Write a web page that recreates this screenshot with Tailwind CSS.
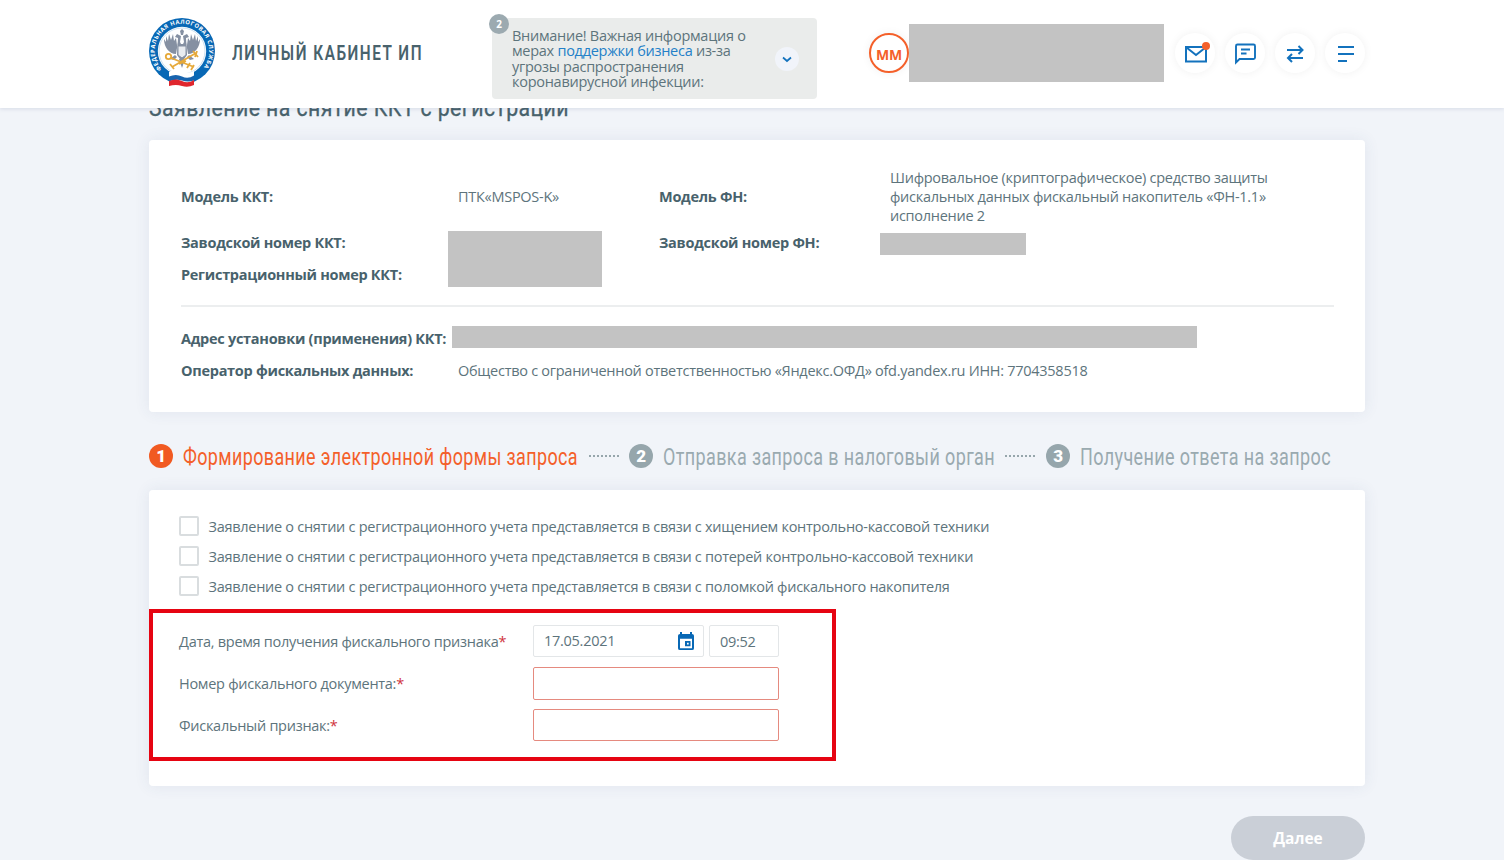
<!DOCTYPE html>
<html lang="ru">
<head>
  <meta charset="UTF-8" />
  <meta name="viewport" content="width=device-width, initial-scale=1.0"/>
  <title>Личный кабинет ИП</title>
  <script src="https://cdn.jsdelivr.net/npm/@tailwindcss/browser@4"></script>
</head>
<body class="h-[860px] overflow-hidden bg-[#f1f4f9] font-['Open_Sans',sans-serif] text-[14.5px] tracking-[-0.275px] text-[#5d747c]">

  <!-- Header -->
  <header class="relative z-10 h-[108px] bg-white shadow-[0_1px_4px_rgba(70,80,130,0.15)]">
    <div class="flex h-[106px] items-center pl-[149px]">

      <!-- Emblem -->
      <svg class="-mt-px h-[72px] w-[66px] shrink-0 tracking-normal" viewBox="0 0 66 72">
        <circle cx="33" cy="34" r="33" fill="#0868b5"/>
        <circle cx="33" cy="34" r="24.2" fill="#fff"/>
        <circle cx="33" cy="34" r="23" fill="none" stroke="#a9cbe5" stroke-width=".6"/>
        <path id="ring" d="M12.7 52.1A27.2 27.2 0 1 1 53.3 52.1" fill="none"/>
        <text class="font-['Open_Sans',sans-serif] text-[5.8px] font-bold" fill="#fff" textLength="122"><textPath href="#ring">ФЕДЕРАЛЬНАЯ НАЛОГОВАЯ СЛУЖБА</textPath></text>
        <!-- eagle -->
        <g fill="#8590a2">
          <path d="M27 37C20 37 15 30 15 22l2 3 0-6 2 5 1-7 2 6 2-6 1 7 2-3 1 7 1-3z"/>
          <path d="M39 37c7 0 12-7 12-15l-2 3 0-6-2 5-1-7-2 6-2-6-1 7-2-3-1 7-1-3z"/>
          <path d="M28 17l4 2-1 6 1 2h2l1-2-1-6 4-2 2 3-3 1 1 17-5 7-5-7 1-17-3-1zM31 14l2-2 2 2-1 4h-2z"/>
          <path d="M26 38l-5 4 4 1 3-3zM40 38l5 4-4 1-3-3zM30 42l3 9 3-9z"/>
        </g>
        <path d="M29 29h8v9l-4 3-4-3z" fill="#e9ecf0" stroke="#8590a2"/>
        <g fill="none" stroke="#e6a93a" stroke-width="1.8">
          <circle cx="19.5" cy="39.5" r="2.7"/>
          <path d="M22 41L45 50M38 51l3-5M42 53l3-5M23 50L47 36M44 34l5 6M48 34l-2 6M21 47l4 5M30 47l7-3"/>
        </g>
        <!-- flag -->
        <path d="M20 55q7-4 13-1t12 0v11q-6 2-12 0t-13 2z" fill="#fff"/>
        <path d="M20 59.500q7-3 13 0t12-1v5q-6 2-12 0t-13 1z" fill="#1764ae"/>
        <path d="M20 64q7-3 13 0t12-1v5q-6 3-12 1t-13 0z" fill="#e0262d"/>
      </svg>

      <svg class="ml-[17px] h-8 w-[192px] shrink-0" fill="#48626c">
        <text class="font-[Roboto,sans-serif] text-[20px] font-semibold tracking-[2px]" x="0" y="23" textLength="191" lengthAdjust="spacingAndGlyphs">ЛИЧНЫЙ КАБИНЕТ ИП</text>
      </svg>

      <!-- Notice -->
      <div class="relative mt-[11px] ml-[68px] flex h-[81px] w-[325px] shrink-0 items-center justify-between rounded bg-[#eaeceb] pr-[18px] pl-[20px]">
        <span class="absolute -top-[4px] -left-[3px] flex size-5 items-center justify-center rounded-full bg-[#9caab0] text-[10px] font-bold text-white">2</span>
        <p class="w-[240px] leading-[15.300px] whitespace-nowrap">Внимание! Важная информация о<br>мерах <a class="text-[#2380c8]">поддержки бизнеса</a> из-за<br>угрозы распространения<br>коронавирусной инфекции:</p>
        <span class="flex size-6 items-center justify-center rounded-full bg-[#f1f4fa]">
          <svg class="size-6" viewBox="0 0 24 24" fill="none" stroke="#1372bd" stroke-width="1.700"><path d="M8 10.500l4 3.500 4-3.500"/></svg>
        </span>
      </div>

      <!-- User -->
      <div class="ml-[52px] flex size-10 shrink-0 items-center justify-center rounded-full border-2 border-[#f4602a] pt-[2px] text-[14px] font-bold text-[#f4602a] shadow-[0_0_10px_rgba(0,0,0,0.06)]">ММ</div>
      <div class="h-[58px] w-[255px] shrink-0 bg-[#c3c3c3]"></div>

      <!-- Actions -->
      <div class="ml-[11px] flex shrink-0 gap-[10px]">
        <span class="size-10 rounded-full bg-white shadow-[0_0_10px_rgba(0,0,0,0.06)]">
          <svg class="size-10" viewBox="0 0 40 40" fill="none" stroke="#1372bd" stroke-width="2"><path d="M11 14h20v14.500H11zM11.500 14.500l9.500 7.500 9.500-7.500"/><circle cx="31" cy="13" r="4" fill="#f4602a" stroke="none"/></svg>
        </span>
        <span class="size-10 rounded-full bg-white shadow-[0_0_10px_rgba(0,0,0,0.06)]">
          <svg class="size-10" viewBox="0 0 40 40" fill="none" stroke="#1372bd" stroke-width="1.900"><path d="M11 29.500V13q0-1.500 1.500-1.500h16q1.500 0 1.500 1.500v11.500q0 1.500-1.500 1.500H14.500zM16 16.500h9M16 20.500h5.500"/></svg>
        </span>
        <span class="size-10 rounded-full bg-white shadow-[0_0_10px_rgba(0,0,0,0.06)]">
          <svg class="size-10" viewBox="0 0 40 40" fill="none" stroke="#1372bd" stroke-width="2"><path d="M12 17h15M23.500 13l4 4-4 4M28 25H13M17 21l-4 4 4 4"/></svg>
        </span>
        <span class="size-10 rounded-full bg-white shadow-[0_0_10px_rgba(0,0,0,0.06)]">
          <svg class="size-10" viewBox="0 0 40 40" fill="none" stroke="#1372bd" stroke-width="2"><path d="M13 14h16M13 21h16M13 28h9"/></svg>
        </span>
      </div>
    </div>
  </header>

  <!-- Main -->
  <main class="-mt-4 pl-[149px]">
    <svg class="block h-12 w-[430px]" fill="#48626c">
      <text class="font-[Roboto,sans-serif] text-[24px] tracking-[0.5px]" x="0" y="23.500" textLength="420" lengthAdjust="spacingAndGlyphs" stroke="#48626c" stroke-width=".3">Заявление на снятие ККТ с регистрации</text>
    </svg>

    <!-- Device details -->
    <section class="h-[272px] w-[1216px] rounded bg-white px-8 pt-[27px] shadow-[0_0_16px_rgba(60,75,120,0.09)]">
      <div class="grid grid-cols-[267px_211px_221px_1fr] grid-rows-[60px_32px_32px] items-center">
        <b class="text-[#48626c]">Модель ККТ:</b>
        <span class="pl-[10px]">ПТК«MSPOS-K»</span>
        <b class="text-[#48626c]">Модель ФН:</b>
        <span class="-mt-[2px] pl-[10px] leading-[19px] whitespace-nowrap">Шифровальное (криптографическое) средство защиты<br>фискальных данных фискальный накопитель «ФН-1.1»<br>исполнение 2</span>
        <b class="text-[#48626c]">Заводской номер ККТ:</b>
        <span class="row-span-2 h-14 w-[154px] bg-[#c3c3c3]"></span>
        <b class="text-[#48626c]">Заводской номер ФН:</b>
        <span class="mt-[2px] h-[22px] w-[146px] bg-[#c3c3c3]"></span>
        <b class="text-[#48626c]">Регистрационный номер ККТ:</b>
      </div>
      <hr class="mt-[14px] mr-[-1px] mb-4 border-t-2 border-[#eceeef]">
      <div class="flex h-8 items-center">
        <b class="w-[271px] whitespace-nowrap text-[#48626c]">Адрес установки (применения) ККТ:</b>
        <span class="mb-[4px] h-[22px] w-[745px] bg-[#c3c3c3]"></span>
      </div>
      <div class="flex h-8 items-center">
        <b class="w-[277px] text-[#48626c]">Оператор фискальных данных:</b>
        <span>Общество с ограниченной ответственностью «Яндекс.ОФД» ofd.yandex.ru ИНН: 7704358518</span>
      </div>
    </section>

    <!-- Steps -->
    <div class="flex h-[78px] items-center font-[Roboto,sans-serif]">
      <span class="mt-[9px] flex size-6 items-center justify-center rounded-full bg-[#f15a22] text-[17px] leading-6 font-black text-white">1</span>
      <svg class="mt-[12px] ml-[10px] h-9 w-[396px]" fill="#f4602a"><text class="text-[23px] tracking-[0.5px]" x="0" y="26" textLength="395" lengthAdjust="spacingAndGlyphs">Формирование электронной формы запроса</text></svg>
      <svg class="mt-[9px] ml-[10px] h-[2px] w-[30px]" stroke="#96a6ac"><path d="M0 1h30" stroke-width="2" stroke-dasharray="2 2"/></svg>
      <span class="mt-[9px] ml-[10px] flex size-6 items-center justify-center rounded-full bg-[#96a6ac] text-[17px] leading-6 font-black text-white">2</span>
      <svg class="mt-[12px] ml-[10px] h-9 w-[332px]" fill="#9aaab0"><text class="text-[23px] tracking-[0.5px]" x="0" y="26" textLength="332" lengthAdjust="spacingAndGlyphs">Отправка запроса в налоговый орган</text></svg>
      <svg class="mt-[9px] ml-[10px] h-[2px] w-[31px]" stroke="#96a6ac"><path d="M0 1h31" stroke-width="2" stroke-dasharray="2 2"/></svg>
      <span class="mt-[9px] ml-[10px] flex size-6 items-center justify-center rounded-full bg-[#96a6ac] text-[17px] leading-6 font-black text-white">3</span>
      <svg class="mt-[12px] ml-[10px] h-9 w-[252px]" fill="#9aaab0"><text class="text-[23px] tracking-[0.5px]" x="0" y="26" textLength="251" lengthAdjust="spacingAndGlyphs">Получение ответа на запрос</text></svg>
    </div>

    <!-- Request form -->
    <form class="h-[296px] w-[1216px] rounded bg-white pt-[22px] shadow-[0_0_16px_rgba(60,75,120,0.09)]">
      <div class="h-[97px] pl-[29.500px]">
        <label class="flex h-[30px] items-center gap-[10px]"><span class="mb-[2px] size-5 rounded-[2px] border-2 border-[#d9dddf]"></span>Заявление о снятии с регистрационного учета представляется в связи с хищением контрольно-кассовой техники</label>
        <label class="flex h-[30px] items-center gap-[10px]"><span class="mb-[2px] size-5 rounded-[2px] border-2 border-[#d9dddf]"></span>Заявление о снятии с регистрационного учета представляется в связи с потерей контрольно-кассовой техники</label>
        <label class="flex h-[30px] items-center gap-[10px]"><span class="mb-[2px] size-5 rounded-[2px] border-2 border-[#d9dddf]"></span>Заявление о снятии с регистрационного учета представляется в связи с поломкой фискального накопителя</label>
      </div>
      <div class="flex h-[152px] w-[687px] flex-col gap-[10px] border-4 border-[#e60412] pt-3 pl-[26px]">
        <div class="flex h-8 items-center">
          <span class="w-[354px] pt-px">Дата, время получения фискального признака<span class="text-[#d0333c]">*</span></span>
          <div class="flex h-8 w-[171px] items-center justify-between rounded-[2px] border border-[#e3e6e8] pr-[8px] pl-[10px]">
            17.05.2021
            <svg class="h-[19px] w-[18px]" viewBox="0 0 18 20" preserveAspectRatio="none" fill="#0868b5"><path fill-rule="evenodd" d="M3 0h2v2h8V0h2v2q2 0 2 2v13q0 2-2 2H3q-2 0-2-2V4q0-2 2-2zM3 7v10h12V7zM8 9.500h5.500V15H8zM10 11.300v1.800h1.700v-1.800z"/></svg>
          </div>
          <div class="ml-[5px] flex h-8 w-[70px] items-center rounded-[2px] border border-[#e3e6e8] pt-px pl-[10px]">09:52</div>
        </div>
        <div class="flex h-[33px] items-center">
          <span class="w-[354px]">Номер фискального документа:<span class="text-[#d0333c]">*</span></span>
          <input class="h-[33px] w-[246px] rounded-[2px] border border-[#e58a7f]">
        </div>
        <div class="-mt-px flex h-8 items-center">
          <span class="w-[354px] pt-px">Фискальный признак:<span class="text-[#d0333c]">*</span></span>
          <input class="h-8 w-[246px] rounded-[2px] border border-[#e58a7f]">
        </div>
      </div>
    </form>

    <div class="flex w-[1216px] justify-end pt-[30px]">
      <button class="h-[44px] w-[134px] rounded-full bg-[#cacfd7] pt-px text-[15.5px] font-bold tracking-normal text-white">Далее</button>
    </div>
  </main>

</body>
</html>
